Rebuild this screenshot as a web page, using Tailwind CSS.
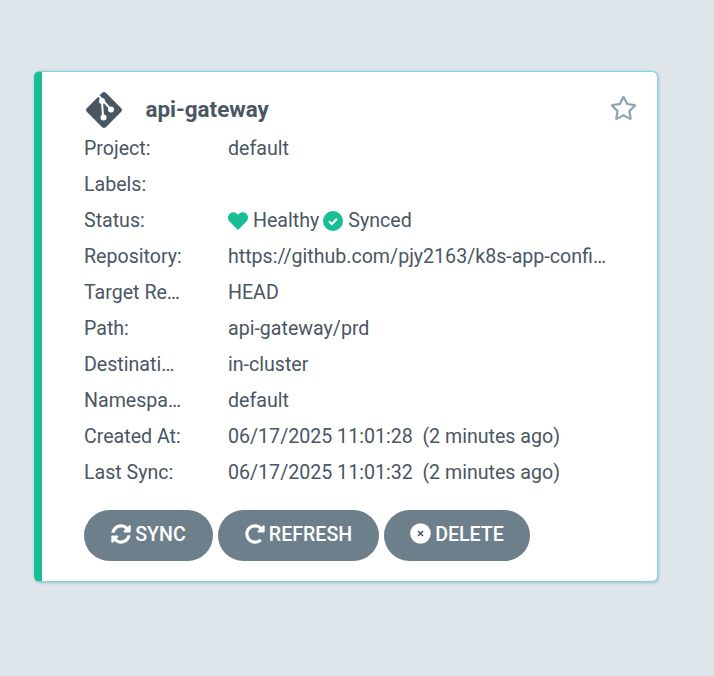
<!DOCTYPE html>
<html lang="en">
<head>
    <meta charset="UTF-8">
    <meta name="viewport" content="width=device-width, initial-scale=1.0">
    <script src="https://cdn.jsdelivr.net/npm/@tailwindcss/browser@4"></script>
    <title>api-gateway</title>
</head>
<body class="bg-[#dee6eb] font-['Roboto',sans-serif] text-[#495763] h-screen overflow-hidden">
    <div class="pt-[71px] pl-[34px]">
        <div class="relative flex flex-col w-[624px] h-[511px] bg-white rounded-[6px] border border-[#84d3dd] border-l-[8px] border-l-[#18be94] shadow-[0_0_2px_#8fd8e2,1px_1px_3px_rgba(143,164,177,0.6)] pl-[42px] pr-[20px]">
            <!-- header -->
            <div class="flex items-center h-[59px] pt-[17px] shrink-0">
                <svg class="w-[38px] h-[38px] shrink-0 ml-[0.5px] -mt-px" viewBox="0 0 38 38">
                    <rect x="5.500" y="5.500" width="27" height="27" rx="3" transform="rotate(45 19 19)" fill="#495763"/>
                    <path d="M12.500 3.500L26 18.500M17 10L18 26" stroke="#fff" stroke-width="2" fill="none"/>
                    <circle cx="17" cy="10" r="3" fill="#fff"/>
                    <circle cx="26" cy="18.500" r="3" fill="#fff"/>
                    <circle cx="18.500" cy="26.500" r="3" fill="#fff"/>
                </svg>
                <span class="ml-[23px] -mt-[2px] text-[22.4px] font-bold leading-none">api-gateway</span>
            </div>
            <svg class="absolute top-[24px] right-[20px] w-[27px] h-[24px]" viewBox="0 0 576 512" fill="#8fa4b1">
                <path d="M528.1 171.5L382 150.2 316.7 17.8c-11.7-23.6-45.6-24.1-57.4 0L194 150.2 47.9 171.500c-26.200 3.800-36.700 36.100-17.700 54.600l105.700 103-25 145.500c-4.500 26.300 23.200 46 46.400 33.700L288 439.600l130.700 68.700c23.200 12.200 50.900-7.400 46.400-33.700l-25-145.500 105.700-103c19-18.500 8.500-50.800-17.700-54.600zM388.600 312.300l23.700 138.400L288 385.400l-124.300 65.300 23.700-138.400-100.600-98 139-20.200 62.200-126 62.200 126 139 20.200-100.600 98z"/>
            </svg>

            <!-- rows -->
            <div class="grid grid-cols-[144px_379px] auto-rows-[36px] items-center text-[19.6px] leading-[36px]">
                <div>Project:</div><div>default</div>
                <div>Labels:</div><div></div>
                <div>Status:</div>
                <div class="flex items-center">
                    <svg class="w-[20px] h-[20px] mr-[5px] -mt-[1px]" viewBox="0 0 512 512" fill="#18be94"><path d="M462.3 62.6C407.5 15.9 326 24.3 275.7 76.2L256 96.5l-19.7-20.3C186.1 24.3 104.5 15.9 49.7 62.6c-62.8 53.6-66.1 149.8-9.9 207.9l193.5 199.8c12.5 12.9 32.8 12.9 45.3 0l193.500-199.800c56.300-58.100 53-154.300-9.800-207.900z"/></svg>
                    <span>Healthy</span>
                    <svg class="w-[20px] h-[20px] ml-[4px] mr-[5px] -mt-[1px]" viewBox="0 0 20 20"><circle cx="10" cy="10" r="10" fill="#18be94"/><path d="M6 10.300l2.800 2.700L14 7.800" stroke="#fff" stroke-width="2" fill="none"/></svg>
                    <span>Synced</span>
                </div>
                <div>Repository:</div><div class="truncate">https://github.com/pjy2163/k8s-app-config-repository</div>
                <div class="truncate w-[100px]">Target Revision:</div><div>HEAD</div>
                <div>Path:</div><div>api-gateway/prd</div>
                <div class="truncate w-[100px]">Destination:</div><div>in-cluster</div>
                <div class="truncate w-[100px]">Namespace:</div><div>default</div>
                <div>Created At:</div><div class="whitespace-pre">06/17/2025 11:01:28  (2 minutes ago)</div>
                <div>Last Sync:</div><div class="whitespace-pre">06/17/2025 11:01:32  (2 minutes ago)</div>
            </div>

            <!-- actions -->
            <div class="flex gap-[5px] mt-[19px] text-[19.6px] font-medium text-white">
                <a href="#" class="flex items-center justify-center gap-[4px] w-[129px] h-[51px] pb-[2px] rounded-full bg-[#6d7f8b]">
                    <svg class="w-[20px] h-[20px] -mt-[2px]" viewBox="0 0 512 512" fill="#fff"><path d="M370.72 133.28C339.458 104.008 298.888 87.962 255.848 88c-77.458.068-144.328 53.178-162.791 126.85-1.344 5.363-6.122 9.15-11.651 9.15H24.103c-7.498 0-13.194-6.807-11.807-14.176C33.933 94.924 134.813 8 256 8c66.448 0 126.791 26.136 171.315 68.685L463.03 40.97C478.149 25.851 504 36.559 504 57.941V192c0 13.255-10.745 24-24 24H345.941c-21.382 0-32.09-25.851-16.971-40.971l41.75-41.749zM32 296h134.059c21.382 0 32.09 25.851 16.971 40.971l-41.75 41.75c31.262 29.273 71.835 45.319 114.876 45.28 77.418-.07 144.315-53.144 162.787-126.849 1.344-5.363 6.122-9.15 11.651-9.15h57.304c7.498 0 13.194 6.807 11.807 14.176C478.067 417.076 377.187 504 256 504c-66.448 0-126.791-26.136-171.315-68.685L48.97 471.03C33.851 486.149 8 475.441 8 454.059V320c0-13.255 10.745-24 24-24z"/></svg>
                    <span>SYNC</span>
                </a>
                <a href="#" class="flex items-center justify-center gap-[4px] w-[161px] h-[51px] pb-[2px] rounded-full bg-[#6d7f8b]">
                    <svg class="w-[20px] h-[20px] -mt-[2px]" viewBox="0 0 512 512" fill="#fff"><path d="M256.455 8c66.269.119 126.437 26.233 170.859 68.685l35.715-35.715C478.149 25.851 504 36.559 504 57.941V192c0 13.255-10.745 24-24 24H345.941c-21.382 0-32.09-25.851-16.971-40.971l41.75-41.75c-30.864-28.899-70.801-44.907-113.23-45.273-92.398-.798-170.283 73.977-169.484 169.442C88.764 348.009 162.184 424 256 424c41.127 0 79.997-14.678 110.629-41.556 4.743-4.161 11.906-3.908 16.368.553l39.662 39.662c4.872 4.872 4.631 12.815-.482 17.433C378.202 479.813 319.926 504 256 504 119.034 504 8.001 392.967 8 256.002 7.999 119.193 119.646 7.755 256.455 8z"/></svg>
                    <span>REFRESH</span>
                </a>
                <a href="#" class="flex items-center justify-center gap-[4px] w-[146px] h-[51px] pb-[2px] rounded-full bg-[#6d7f8b]">
                    <svg class="w-[21px] h-[21px] -mt-[2px]" viewBox="0 0 21 21"><circle cx="10.500" cy="10.500" r="10.300" fill="#fff"/><path d="M8 8l5 5M13 8l-5 5" stroke="#495763" stroke-width="1.600"/></svg>
                    <span>DELETE</span>
                </a>
            </div>
        </div>
    </div>
</body>
</html>
